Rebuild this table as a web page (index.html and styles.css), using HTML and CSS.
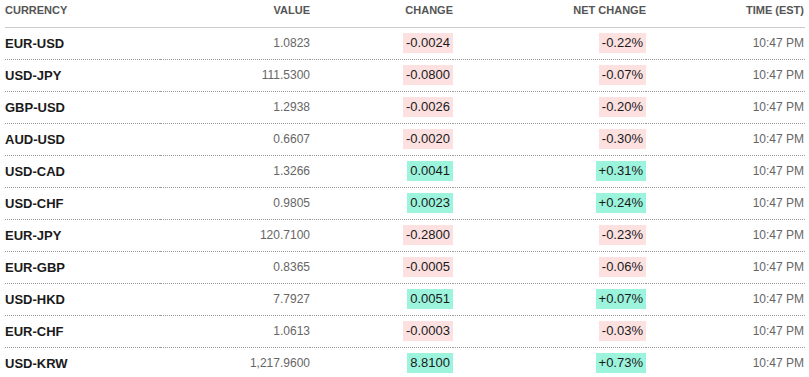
FILE: index.html
```html
<!DOCTYPE html>
<html lang="en">
<head>
<meta charset="UTF-8">
<title>Currencies</title>
<link rel="stylesheet" href="styles.css">
</head>
<body>
<table class="rates">
<colgroup>
<col class="c-name"><col class="c-value"><col class="c-change"><col class="c-net"><col class="c-time">
</colgroup>
<thead>
<tr>
<th class="left">CURRENCY</th>
<th>VALUE</th>
<th>CHANGE</th>
<th>NET CHANGE</th>
<th class="last">TIME (EST)</th>
</tr>
</thead>
<tbody>
<tr><td class="name">EUR-USD</td><td class="value">1.0823</td><td><span class="chg down">-0.0024</span></td><td><span class="chg down">-0.22%</span></td><td class="time">10:47 PM</td></tr>
<tr><td class="name">USD-JPY</td><td class="value">111.5300</td><td><span class="chg down">-0.0800</span></td><td><span class="chg down">-0.07%</span></td><td class="time">10:47 PM</td></tr>
<tr><td class="name">GBP-USD</td><td class="value">1.2938</td><td><span class="chg down">-0.0026</span></td><td><span class="chg down">-0.20%</span></td><td class="time">10:47 PM</td></tr>
<tr><td class="name">AUD-USD</td><td class="value">0.6607</td><td><span class="chg down">-0.0020</span></td><td><span class="chg down">-0.30%</span></td><td class="time">10:47 PM</td></tr>
<tr><td class="name">USD-CAD</td><td class="value">1.3266</td><td><span class="chg up">0.0041</span></td><td><span class="chg up">+0.31%</span></td><td class="time">10:47 PM</td></tr>
<tr><td class="name">USD-CHF</td><td class="value">0.9805</td><td><span class="chg up">0.0023</span></td><td><span class="chg up">+0.24%</span></td><td class="time">10:47 PM</td></tr>
<tr><td class="name">EUR-JPY</td><td class="value">120.7100</td><td><span class="chg down">-0.2800</span></td><td><span class="chg down">-0.23%</span></td><td class="time">10:47 PM</td></tr>
<tr><td class="name">EUR-GBP</td><td class="value">0.8365</td><td><span class="chg down">-0.0005</span></td><td><span class="chg down">-0.06%</span></td><td class="time">10:47 PM</td></tr>
<tr><td class="name">USD-HKD</td><td class="value">7.7927</td><td><span class="chg up">0.0051</span></td><td><span class="chg up">+0.07%</span></td><td class="time">10:47 PM</td></tr>
<tr><td class="name">EUR-CHF</td><td class="value">1.0613</td><td><span class="chg down">-0.0003</span></td><td><span class="chg down">-0.03%</span></td><td class="time">10:47 PM</td></tr>
<tr><td class="name">USD-KRW</td><td class="value">1,217.9600</td><td><span class="chg up">8.8100</span></td><td><span class="chg up">+0.73%</span></td><td class="time">10:47 PM</td></tr>
</tbody>
</table>
</body>
</html>
```

FILE: styles.css
```css
body {
margin: 0;
padding: 0 4px 0 5px;
background: #fff;
font-family: "Liberation Sans", Arial, sans-serif;
color: #1a1a1a;
}
.rates {
width: 800px;
border-collapse: collapse;
table-layout: fixed;
}
.c-name { width: 155px; }
.c-value { width: 150px; }
.c-change { width: 143px; }
.c-net { width: 193px; }
.c-time { width: 159px; }
.rates th {
height: 27px;
padding: 0;
font-size: 11px;
font-weight: 700;
color: #555;
text-align: right;
vertical-align: top;
padding-top: 4px;
line-height: 13px;
border-bottom: 1px solid #ccc;
box-sizing: border-box;
}
.rates th.left {
text-align: left;
}
.rates th.last, .rates td.time {
padding-right: 1px;
}
.rates td {
height: 31px;
padding: 0;
text-align: right;
vertical-align: middle;
border-bottom: 1px dotted #999;
}
.rates td.name {
text-align: left;
font-size: 13px;
font-weight: 700;
color: #1a1a1a;
}
.rates td.value, .rates td.time {
font-size: 12px;
color: #666;
}
.chg {
display: inline-block;
font-size: 13px;
line-height: 20px;
padding: 0 3px;
color: #1a1a1a;
}
.chg.down {
background: #fde1e1;
}
.chg.up {
background: #9cf4dc;
}
```
